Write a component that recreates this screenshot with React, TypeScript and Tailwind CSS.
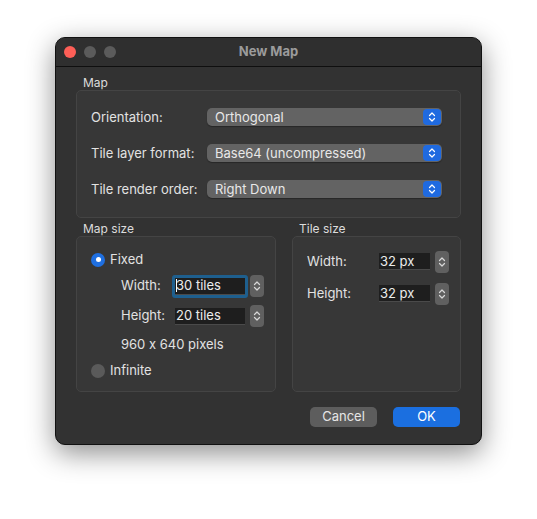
import React from 'react'

const font = { fontFamily: 'Inter, "Noto Sans", sans-serif', fontFeatureSettings: '"calt" 0' }

function UpDown({ blue }: { blue?: boolean }) {
  return (
    <svg width="8" height="12" viewBox="0 0 8 12" fill="none">
      <path d="M1.5 4.5 L4 2 L6.5 4.5" stroke={blue ? '#fff' : '#d8d8d8'} strokeWidth="1.2" strokeLinecap="round" strokeLinejoin="round" />
      <path d="M1.5 7.5 L4 10 L6.5 7.5" stroke={blue ? '#fff' : '#d8d8d8'} strokeWidth="1.2" strokeLinecap="round" strokeLinejoin="round" />
    </svg>
  )
}

function Combo({ value }: { value: string }) {
  return (
    <div className="flex h-[18px] w-[235px] items-center justify-between rounded-[5px] bg-[#636363] pl-[8px] pr-[1px] shadow-[0_1px_1px_rgba(0,0,0,0.3)]">
      <span className="text-[13px] leading-none text-[#e8e8e8]">{value}</span>
      <div className="flex h-[16px] w-[18px] items-center justify-center rounded-[4px] bg-[#1f6ae0]">
        <UpDown blue />
      </div>
    </div>
  )
}

function Stepper() {
  return (
    <div className="flex h-[22px] w-[14px] flex-col items-center justify-center rounded-[4px] bg-[#606060]">
      <UpDown />
    </div>
  )
}

function SpinField({ value, width, focused }: { value: string; width: string; focused?: boolean }) {
  return (
    <div className="flex items-center gap-[2px]">
      <div
        className={
          focused
            ? 'rounded-[3px] border-[3px] border-[#1e5f8e] p-0'
            : 'border-[3px] border-transparent'
        }
      >
        <div className={`flex h-[17px] ${width} items-center border-b border-[#4a4a4a] bg-[#1e1e1e] pl-[1px]`}>
          <span className="text-[13px] leading-none text-[#ececec]">
            {focused && <span className="mr-[-1px] inline-block h-[13px] w-px bg-white align-middle" />}
            {value}
          </span>
        </div>
      </div>
      <Stepper />
    </div>
  )
}

function Radio({ checked, label }: { checked?: boolean; label: string }) {
  return (
    <div className="flex items-center gap-[5px]">
      {checked ? (
        <div className="flex h-[14px] w-[14px] items-center justify-center rounded-full bg-[#1f6fe0]">
          <div className="h-[5px] w-[5px] rounded-full bg-white" />
        </div>
      ) : (
        <div className="h-[14px] w-[14px] rounded-full bg-[#5a5a5a]" />
      )}
      <span className="text-[13px] text-[#e2e2e2]">{label}</span>
    </div>
  )
}

export default function App() {
  const rows = [
    { label: 'Orientation:', value: 'Orthogonal' },
    { label: 'Tile layer format:', value: 'Base64 (uncompressed)' },
    { label: 'Tile render order:', value: 'Right Down' },
  ]

  return (
    <main className="h-[519px] w-[537px] bg-white pl-[55px] pt-[37px]" style={font}>
      <div className="flex h-[408px] w-[427px] flex-col overflow-hidden rounded-[10px] border border-[#111] bg-[#323232] shadow-[0_8px_28px_rgba(0,0,0,0.45)]">
        {/* TITLE BAR */}
        <div className="relative flex h-[29px] shrink-0 items-center border-b border-[#0f0f0f] bg-[#2f2f2f] px-[8px]">
          <div className="flex gap-[8px]">
            <div className="h-[12px] w-[12px] rounded-full bg-[#fe5f57]" />
            <div className="h-[12px] w-[12px] rounded-full bg-[#5b5b5b]" />
            <div className="h-[12px] w-[12px] rounded-full bg-[#5b5b5b]" />
          </div>
          <div className="flex-1 pr-[52px] text-center text-[13px] font-bold text-[#9b9b9b]">New Map</div>
        </div>

        {/* BODY */}
        <div className="flex flex-1 flex-col px-[20px] pt-[8px]">
          <p className="pl-[7px] text-[12px] leading-[15px] text-[#dcdcdc]">Map</p>
          <section className="flex h-[128px] flex-col gap-[18px] rounded-[5px] border border-[#444] bg-[#373737] pl-[14px] pr-[17px] pt-[17px]">
            {rows.map((r) => (
              <div key={r.label} className="flex h-[18px] items-center">
                <span className="w-[116px] pt-[1px] text-[13px] text-[#e2e2e2]">{r.label}</span>
                <Combo value={r.value} />
              </div>
            ))}
          </section>

          <div className="mt-[3px] flex gap-[16px]">
            {/* MAP SIZE */}
            <div className="flex flex-col">
              <p className="pl-[7px] text-[12px] leading-[15px] text-[#dcdcdc]">Map size</p>
              <section className="h-[156px] w-[200px] rounded-[5px] border border-[#444] bg-[#373737] pl-[14px] pt-[13px]">
                <Radio checked label="Fixed" />
                <div className="mt-[5px] flex flex-col gap-[7px] pl-[30px]">
                  <div className="flex items-center">
                    <span className="w-[51px] text-[13px] text-[#e2e2e2]">Width:</span>
                    <SpinField value="30 tiles" width="w-[70px]" focused />
                  </div>
                  <div className="flex items-center">
                    <span className="w-[51px] text-[13px] text-[#e2e2e2]">Height:</span>
                    <SpinField value="20 tiles" width="w-[70px]" />
                  </div>
                  <p className="text-[13px] text-[#e2e2e2]">960 x 640 pixels</p>
                </div>
                <div className="mt-[7px]">
                  <Radio label="Infinite" />
                </div>
              </section>
            </div>

            {/* TILE SIZE */}
            <div className="flex flex-col">
              <p className="pl-[7px] text-[12px] leading-[15px] text-[#dcdcdc]">Tile size</p>
              <section className="flex h-[156px] w-[169px] flex-col gap-[9px] rounded-[5px] border border-[#444] bg-[#373737] pl-[14px] pt-[13px]">
                <div className="flex items-center">
                  <span className="w-[69px] text-[13px] text-[#e2e2e2]">Width:</span>
                  <SpinField value="32 px" width="w-[51px]" />
                </div>
                <div className="flex items-center">
                  <span className="w-[69px] text-[13px] text-[#e2e2e2]">Height:</span>
                  <SpinField value="32 px" width="w-[51px]" />
                </div>
              </section>
            </div>
          </div>

          {/* BUTTONS */}
          <div className="mt-[15px] flex justify-end gap-[16px] pr-[1px]">
            <button className="h-[20px] w-[67px] rounded-[5px] bg-[#5d5d5d] text-[13px] text-[#e6e6e6]">Cancel</button>
            <button className="h-[20px] w-[67px] rounded-[5px] bg-[#1b6fe0] text-[13px] text-white">OK</button>
          </div>
        </div>
      </div>
    </main>
  )
}
